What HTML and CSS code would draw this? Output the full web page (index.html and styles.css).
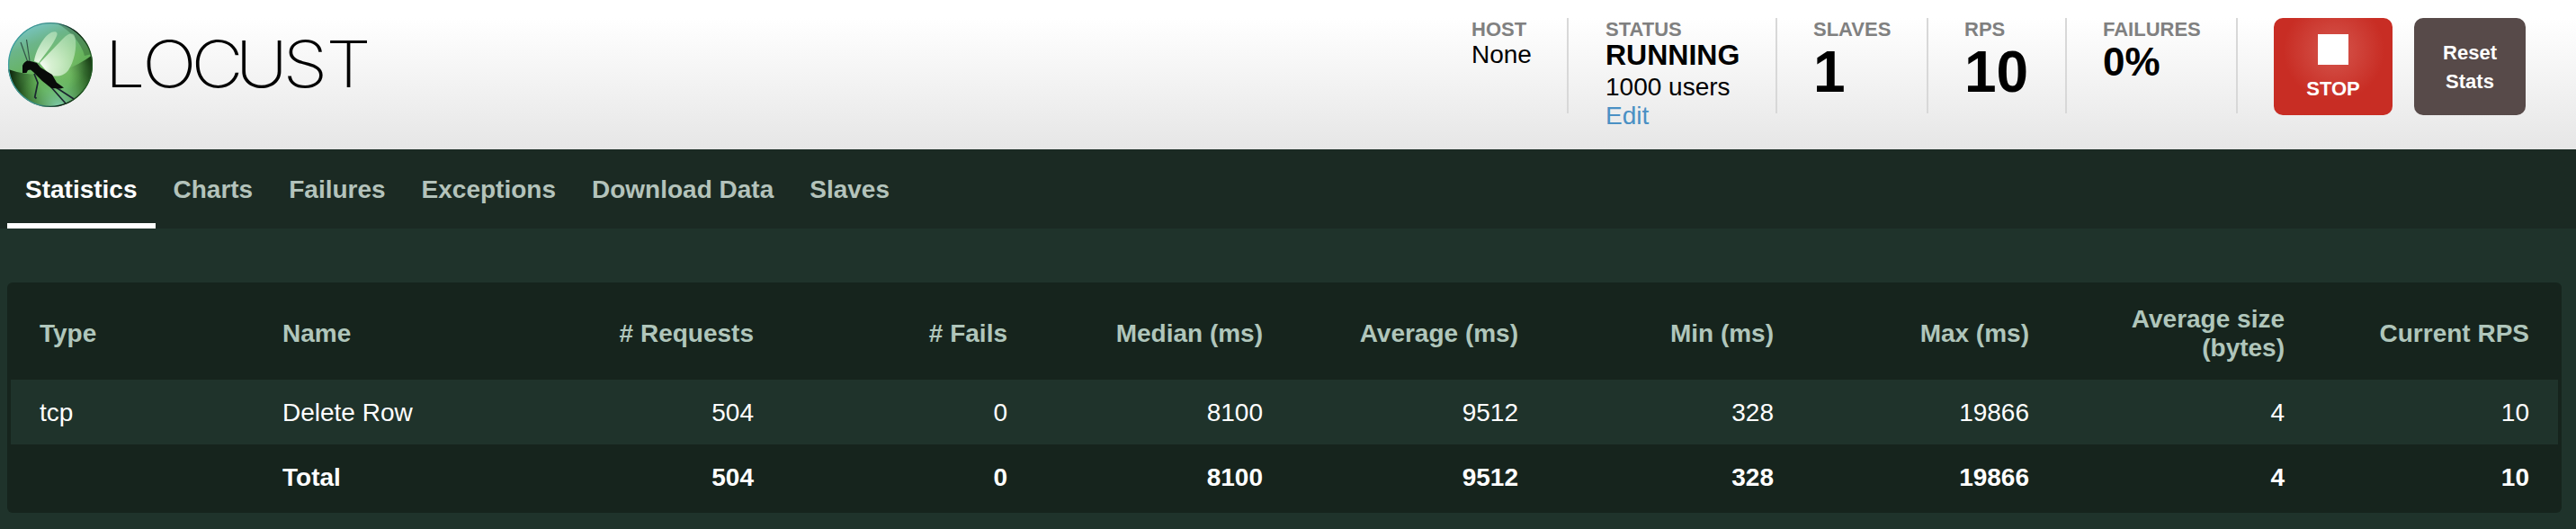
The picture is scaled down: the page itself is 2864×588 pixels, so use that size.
FILE: index.html
```html
<!DOCTYPE html>
<html lang="en">
<head>
<meta charset="utf-8">
<title>Locust</title>
<link rel="stylesheet" href="styles.css">
</head>
<body>
<header class="top">
  <svg class="logo" width="416" height="120" viewBox="0 0 416 120" role="img" aria-label="Locust">
    <defs>
      <linearGradient id="globe" x1=".2" y1="0" x2=".6" y2="1">
        <stop offset="0" stop-color="#7cc9d2"/>
        <stop offset=".25" stop-color="#6cb58a"/>
        <stop offset=".55" stop-color="#66b35c"/>
        <stop offset="1" stop-color="#4f9c4a"/>
      </linearGradient>
      <radialGradient id="shade" gradientUnits="userSpaceOnUse" cx="60" cy="86" r="50">
        <stop offset=".35" stop-color="#0b2b08" stop-opacity="0"/>
        <stop offset=".75" stop-color="#0b2b08" stop-opacity=".6"/>
        <stop offset="1" stop-color="#061a04" stop-opacity=".95"/>
      </radialGradient>
      <radialGradient id="rimlight" cx=".6" cy="1" r=".5">
        <stop offset="0" stop-color="#84d0b4" stop-opacity=".95"/>
        <stop offset="1" stop-color="#6fc04e" stop-opacity="0"/>
      </radialGradient>
      <radialGradient id="glow" cx=".5" cy=".5" r=".5">
        <stop offset="0" stop-color="#a6dc92" stop-opacity=".5"/>
        <stop offset="1" stop-color="#8fd070" stop-opacity="0"/>
      </radialGradient>
      <radialGradient id="wing" gradientUnits="userSpaceOnUse" cx="45" cy="75" r="46">
        <stop offset="0" stop-color="#fff"/>
        <stop offset=".25" stop-color="#e6f8e2" stop-opacity=".88"/>
        <stop offset="1" stop-color="#bfe8bd" stop-opacity=".6"/>
      </radialGradient>
      <linearGradient id="edge" x1="0" y1=".2" x2="1" y2=".4">
        <stop offset="0" stop-color="#3fa0a4"/>
        <stop offset=".5" stop-color="#3c8a84"/>
        <stop offset=".75" stop-color="#0c1c10"/>
        <stop offset="1" stop-color="#235c25"/>
      </linearGradient>
      <clipPath id="disc"><circle cx="56" cy="72" r="47"/></clipPath>
    </defs>
    <g clip-path="url(#disc)">
      <circle cx="56" cy="72" r="47" fill="url(#globe)"/>
      <path d="M9 77Q58 94 103 61V120H9Z" fill="url(#shade)"/>
      <circle cx="56" cy="72" r="47" fill="url(#rimlight)"/>
      <path d="M62 25Q94 30 102 60L94 62Q88 40 62 25Z" fill="#173d20" opacity=".3"/>
      <ellipse cx="66" cy="70" rx="30" ry="32" fill="url(#glow)"/>
      <path d="M38 68C40 55 49 40 57 36C62 34 65 36 63 40C59 50 50 60 43 70Z" fill="url(#wing)"/>
      <path d="M44 70L70 43C77 36 82 36 83.5 42C86 53 82 69 76 78C71 85 62 86 55 83Z" fill="url(#wing)"/>
      <path d="M30.5 68L23 47M33 68L29.500 44" fill="none" stroke="#33564a" stroke-width="1.2"/>
      <path d="M38 82L42 92L38.700 108L40.500 109.500M57 97L73 115M62 97L82 110" fill="none" stroke="#1b2530" stroke-width="1.700"/>
      <path d="M25 73Q27 68 31 67.500L36 68.500L41 70L45 75L58 83L63 91.700L71 97.500L67 98.500L57 98L47 90L37 80L34 77.500L31 78L29.500 81H25Z" fill="#080b09"/>
    </g>
    <circle cx="56" cy="72" r="46.4" fill="none" stroke="url(#edge)" stroke-width="1.300"/>
    <text class="wordmark" transform="scale(1.12 1)" y="97" x="104 141.3 189.8 233.7 280.7 323.7">LOCUST</text>
  </svg>
  <div class="boxes">
    <section class="box host"><h2 class="label">HOST</h2><div class="text">None</div></section>
    <section class="box status"><h2 class="label">STATUS</h2><div class="state">RUNNING</div><div class="text">1000 users</div><a class="text edit">Edit</a></section>
    <section class="box slaves"><h2 class="label">SLAVES</h2><div class="big">1</div></section>
    <section class="box rps"><h2 class="label">RPS</h2><div class="big">10</div></section>
    <section class="box fails"><h2 class="label">FAILURES</h2><div class="ratio">0%</div></section>
    <button class="btn stop"><span class="square"></span>STOP</button>
    <button class="btn reset">Reset<br>Stats</button>
  </div>
</header>
<nav class="menu">
  <a class="tab active">Statistics</a><a class="tab">Charts</a><a class="tab">Failures</a><a class="tab">Exceptions</a><a class="tab">Download Data</a><a class="tab">Slaves</a>
</nav>
<main class="main">
  <div class="panel">
    <table class="stats">
      <colgroup><col class="c-type"><col class="c-name"><col class="c-req"><col class="c-fail"><col class="c-num"><col class="c-num"><col class="c-num"><col class="c-num"><col class="c-num"><col class="c-last"></colgroup>
      <thead>
        <tr><th class="left">Type</th><th class="left">Name</th><th># Requests</th><th># Fails</th><th>Median (ms)</th><th>Average (ms)</th><th>Min (ms)</th><th>Max (ms)</th><th>Average size (bytes)</th><th>Current RPS</th></tr>
      </thead>
      <tbody>
        <tr class="row"><td class="left">tcp</td><td class="left">Delete Row</td><td>504</td><td>0</td><td>8100</td><td>9512</td><td>328</td><td>19866</td><td>4</td><td>10</td></tr>
        <tr class="total"><td class="left"></td><td class="left">Total</td><td>504</td><td>0</td><td>8100</td><td>9512</td><td>328</td><td>19866</td><td>4</td><td>10</td></tr>
      </tbody>
    </table>
  </div>
</main>
</body>
</html>
```
FILE: styles.css
```css
* { box-sizing: border-box; }
body {
  margin: 0;
  min-height: 588px;
  background: #1f332b;
  color: #fff;
  font: 28px/32px Arial, "Liberation Sans", sans-serif;
}
.top {
  display: flex;
  justify-content: space-between;
  height: 166px;
  padding-right: 56px;
  background: linear-gradient(#fff 0, #fff 12%, #e6e6e6 100%);
  color: #000;
}
.logo { display: block; }
.wordmark { font: 200 71.5px Inter, sans-serif; fill: #000; }
.boxes { display: flex; padding-top: 20px; }
.box {
  height: 106px;
  padding-left: 40px;
  border-right: 2px solid #d8d8d8;
  white-space: nowrap;
}
.host { width: 149px; padding-left: 41px; }
.status { width: 232px; padding-left: 41px; }
.slaves { width: 168px; }
.rps { width: 154px; }
.fails { width: 190px; }
.label {
  margin: 0;
  color: #808080;
  font-size: 22px;
  font-weight: bold;
  line-height: 25px;
}
.state { margin-bottom: 3px; font-size: 32px; font-weight: bold; line-height: 33px; }
.text { display: block; }
.edit { color: #4a90c4; }
.big { font-size: 64px; font-weight: bold; line-height: 70px; }
.ratio { font-size: 44px; font-weight: bold; line-height: 47px; }
.btn {
  display: flex;
  flex-direction: column;
  align-items: center;
  height: 108px;
  margin: 0;
  padding: 0;
  border: 0;
  border-radius: 10px;
  color: #fff;
  font: bold 22px/32px Arial, "Liberation Sans", sans-serif;
}
.stop {
  width: 132px;
  margin-left: 40px;
  padding-top: 18px;
  background: radial-gradient(circle at 67px 36px, #d5564d 0, #c82d24 56px);
}
.square { width: 34px; height: 34px; margin-bottom: 11px; background: #fff; }
.reset { display: block; width: 124px; margin-left: 24px; padding-top: 2px; background: #574a49; }
.menu {
  display: flex;
  height: 88px;
  padding-left: 8px;
  background: #1b2a23;
}
.tab {
  padding: 29px 20px 21px;
  border-bottom: 6px solid transparent;
  color: #b4c3bb;
  font-weight: bold;
}
.active { border-color: #fff; color: #fff; }
.main { padding: 60px 16px 0 8px; }
.panel { padding: 4px; border-radius: 6px; background: #16241d; }
.stats { width: 2832px; table-layout: fixed; border-collapse: collapse; }
.c-type { width: 270px; }
.c-name { width: 305px; }
.c-req { width: 283px; }
.c-fail { width: 282px; }
.c-num { width: 284px; }
.c-last { width: 272px; }
.stats th, .stats td { padding: 21px 32px 19px; text-align: right; }
.stats .left { text-align: left; }
.stats th { color: #b0c6bb; }
.row { background: #1f332b; }
.total { font-weight: bold; }
```
